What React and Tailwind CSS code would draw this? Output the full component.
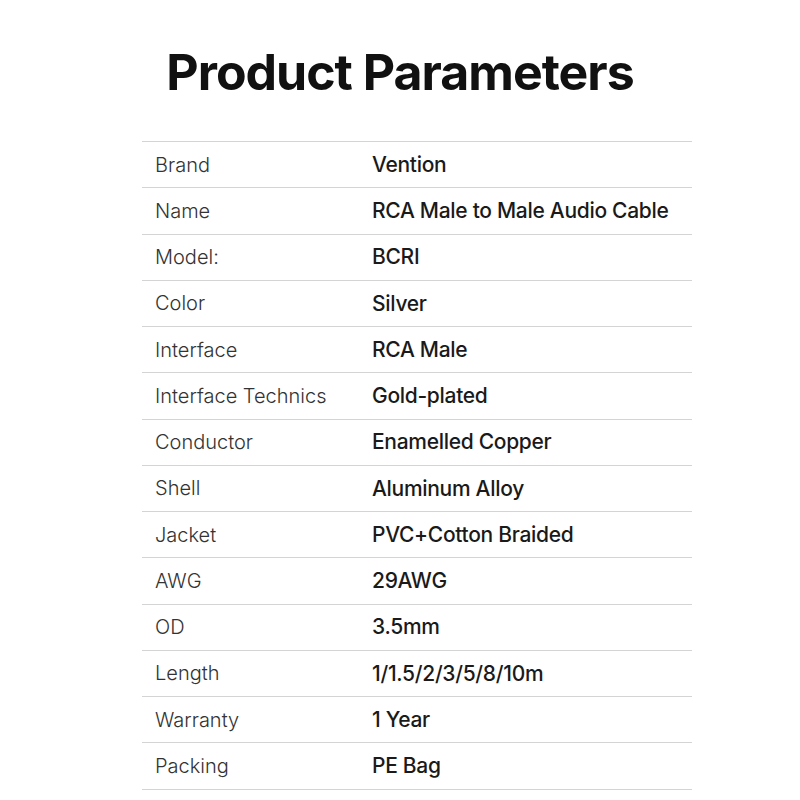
import React from 'react';

const params = [
  ['Brand', 'Vention'],
  ['Name', 'RCA Male to Male Audio Cable'],
  ['Model:', 'BCRI'],
  ['Color', 'Silver'],
  ['Interface', 'RCA Male'],
  ['Interface Technics', 'Gold-plated'],
  ['Conductor', 'Enamelled Copper'],
  ['Shell', 'Aluminum Alloy'],
  ['Jacket', 'PVC+Cotton Braided'],
  ['AWG', '29AWG'],
  ['OD', '3.5mm'],
  ['Length', '1/1.5/2/3/5/8/10m'],
  ['Warranty', '1 Year'],
  ['Packing', 'PE Bag'],
];

export default function App() {
  return (
    <div className="w-[800px] h-[800px] bg-white font-['Inter',sans-serif] overflow-hidden">
      {/* Title */}
      <div className="h-[141px] flex items-center justify-center pt-[2px]">
        <h1 className="text-[50px] leading-none font-bold text-[#111] tracking-[-1px]">
          Product Parameters
        </h1>
      </div>

      {/* Parameters table */}
      <div className="ml-[142px] w-[550px] border-t border-[#d4d4d4]">
        {params.map(([label, value]) => (
          <div
            key={label}
            className="h-[46.25px] flex items-center border-b border-[#d4d4d4]"
          >
            <span className="w-[230px] pl-[13px] text-[20px] font-light text-[#333]">{label}</span>
            <span className="text-[21px] font-medium tracking-[-0.3px] text-[#1a1a1a]">{value}</span>
          </div>
        ))}
      </div>
    </div>
  );
}
